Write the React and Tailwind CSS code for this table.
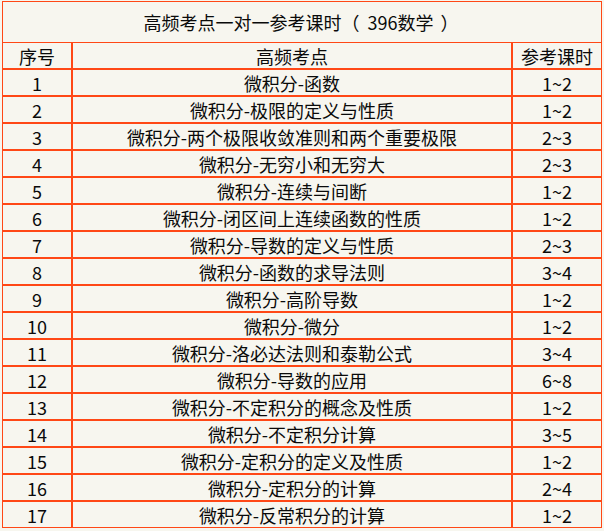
const rows = [
  ["1", "微积分-函数", "1~2"],
  ["2", "微积分-极限的定义与性质", "1~2"],
  ["3", "微积分-两个极限收敛准则和两个重要极限", "2~3"],
  ["4", "微积分-无穷小和无穷大", "2~3"],
  ["5", "微积分-连续与间断", "1~2"],
  ["6", "微积分-闭区间上连续函数的性质", "1~2"],
  ["7", "微积分-导数的定义与性质", "2~3"],
  ["8", "微积分-函数的求导法则", "3~4"],
  ["9", "微积分-高阶导数", "1~2"],
  ["10", "微积分-微分", "1~2"],
  ["11", "微积分-洛必达法则和泰勒公式", "3~4"],
  ["12", "微积分-导数的应用", "6~8"],
  ["13", "微积分-不定积分的概念及性质", "1~2"],
  ["14", "微积分-不定积分计算", "3~5"],
  ["15", "微积分-定积分的定义及性质", "1~2"],
  ["16", "微积分-定积分的计算", "2~4"],
  ["17", "微积分-反常积分的计算", "1~2"],
];

const cell = "border border-[#ff4816] p-0 text-center align-middle leading-none";

export default function App() {
  return (
    <div
      className="w-[604px] h-[531px] bg-[#f7f6ef] pt-[1px] pl-[2px] text-[18px] text-[#0a0a0a]"
      style={{ fontFamily: '"Noto Sans CJK SC", "Noto Sans", sans-serif' }}
    >
      <table className="table-fixed border-separate border-spacing-0 w-[600px]">
        <colgroup>
          <col className="w-[70px]" />
          <col className="w-[440px]" />
          <col className="w-[90px]" />
        </colgroup>
        <tbody>
          <tr className="h-[41px]">
            <td colSpan={3} className={`${cell} border-b-0 pb-[1px]`}>
              高频考点一对一参考课时<span className="mr-[8px]">（</span>396数学<span className="ml-[7px] mr-[2px]">）</span>
            </td>
          </tr>
          <tr className="h-[27px]">
            <td className={cell}>序号</td>
            <td className={cell}>高频考点</td>
            <td className={cell}>参考课时</td>
          </tr>
          {rows.map(([n, topic, hours]) => (
            <tr key={n} className="h-[27px]">
              <td className={cell}>{n}</td>
              <td className={cell}>{topic}</td>
              <td className={cell}>{hours}</td>
            </tr>
          ))}
        </tbody>
      </table>
    </div>
  );
}
